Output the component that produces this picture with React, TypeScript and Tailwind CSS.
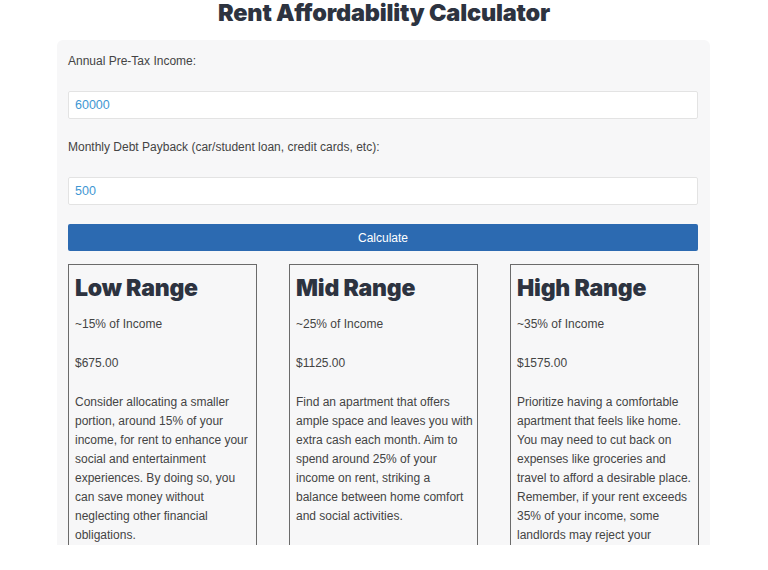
import React from "react";

const ranges = [
  {
    title: "Low Range",
    pct: "~15% of Income",
    amount: "$675.00",
    text: "Consider allocating a smaller portion, around 15% of your income, for rent to enhance your social and entertainment experiences. By doing so, you can save money without neglecting other financial obligations.",
  },
  {
    title: "Mid Range",
    pct: "~25% of Income",
    amount: "$1125.00",
    text: "Find an apartment that offers ample space and leaves you with extra cash each month. Aim to spend around 25% of your income on rent, striking a balance between home comfort and social activities.",
  },
  {
    title: "High Range",
    pct: "~35% of Income",
    amount: "$1575.00",
    text: "Prioritize having a comfortable apartment that feels like home. You may need to cut back on expenses like groceries and travel to afford a desirable place. Remember, if your rent exceeds 35% of your income, some landlords may reject your application.",
  },
];

export default function App() {
  return (
    <div className="w-[768px] h-[570px] bg-white overflow-hidden font-['Liberation_Sans',Arial,sans-serif]">
      {/* Title */}
      <h1 className="text-center text-[23.5px] leading-[26px] font-black text-[#2d3340] font-['Inter',sans-serif] tracking-[-0.2px]">
        Rent Affordability Calculator
      </h1>

      {/* Form panel */}
      <div className="mx-[57px] w-[653px] mt-[14px] h-[505px] overflow-hidden bg-[#f7f7f8] rounded-t-md px-[11px] pt-[13px]">
        <label className="block text-[12px] leading-[16px] text-[#444]">Annual Pre-Tax Income:</label>
        <input
          readOnly
          value="60000"
          className="block w-[630px] mt-[22px] h-[28px] bg-white border border-[#e3e3e3] rounded-[2px] px-[6px] text-[12.5px] text-[#3f97d3] outline-none"
        />
        <label className="block mt-[20px] text-[12px] leading-[16px] text-[#444]">
          Monthly Debt Payback (car/student loan, credit cards, etc):
        </label>
        <input
          readOnly
          value="500"
          className="block w-[630px] mt-[22px] h-[28px] bg-white border border-[#e3e3e3] rounded-[2px] px-[6px] text-[12.5px] text-[#3f97d3] outline-none"
        />
        <button className="block w-[630px] mt-[19px] h-[27px] bg-[#2c6ab1] rounded-[2px] text-white text-[12px]">
          Calculate
        </button>

        {/* Result cards */}
        <div className="grid grid-cols-[189px_189px_189px] gap-x-[32px] mt-[13px]">
          {ranges.map((r) => (
            <div key={r.title} className="border border-[#6b6b6b] pl-[6px] pr-[3px] pt-[8px] pb-4 min-h-[300px]">
              <h2 className="text-[23px] leading-[30px] font-black text-[#2d3340] font-['Inter',sans-serif] tracking-[-0.2px]">
                {r.title}
              </h2>
              <p className="mt-[12px] text-[12px] leading-[19px] text-[#444]">{r.pct}</p>
              <p className="mt-[20px] text-[12px] leading-[19px] text-[#444]">{r.amount}</p>
              <p className="mt-[20px] text-[12px] leading-[19px] text-[#444]">{r.text}</p>
            </div>
          ))}
        </div>
      </div>
    </div>
  );
}
